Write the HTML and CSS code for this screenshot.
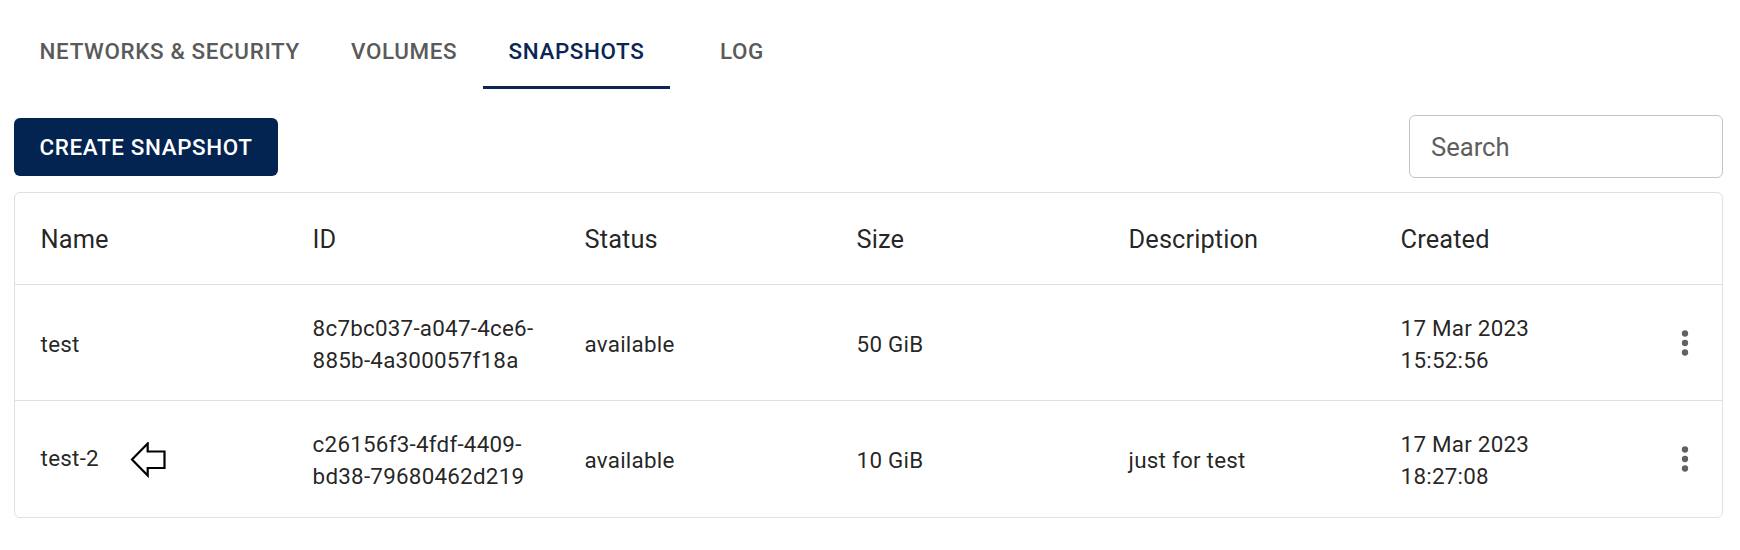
FILE: index.html
```html
<!DOCTYPE html>
<html lang="en">
<head>
<meta charset="utf-8">
<title>Snapshots</title>
<link rel="stylesheet" href="styles.css">
</head>
<body>
<div class="page">
  <nav class="tabs">
    <div class="tab">Networks &amp; Security</div>
    <div class="tab">Volumes</div>
    <div class="tab active">Snapshots</div>
    <div class="tab">Log</div>
  </nav>

  <div class="toolbar">
    <button class="btn-primary" type="button">Create Snapshot</button>
    <div class="search"><span class="placeholder">Search</span></div>
  </div>

  <div class="paper">
    <table class="table">
      <colgroup>
        <col class="c-data"><col class="c-data"><col class="c-data"><col class="c-data"><col class="c-data"><col class="c-data"><col class="c-act">
      </colgroup>
      <thead>
        <tr>
          <th>Name</th><th>ID</th><th>Status</th><th>Size</th><th>Description</th><th>Created</th><th></th>
        </tr>
      </thead>
      <tbody>
        <tr>
          <td>test</td>
          <td>8c7bc037-a047-4ce6-<br>885b-4a300057f18a</td>
          <td>available</td>
          <td>50 GiB</td>
          <td></td>
          <td>17 Mar 2023<br>15:52:56</td>
          <td class="act"><svg class="kebab" viewBox="0 0 24 24"><circle cx="12" cy="6" r="2"/><circle cx="12" cy="12" r="2"/><circle cx="12" cy="18" r="2"/></svg></td>
        </tr>
        <tr class="last">
          <td>test-2<svg class="pointer" viewBox="0 0 36 36"><polygon points="2,17.5 17.7,1.5 17.7,9.5 34.5,9.5 34.5,26 17.7,26 17.7,33.5" /></svg></td>
          <td>c26156f3-4fdf-4409-<br>bd38-79680462d219</td>
          <td>available</td>
          <td>10 GiB</td>
          <td>just for test</td>
          <td>17 Mar 2023<br>18:27:08</td>
          <td class="act"><svg class="kebab" viewBox="0 0 24 24"><circle cx="12" cy="6" r="2"/><circle cx="12" cy="12" r="2"/><circle cx="12" cy="18" r="2"/></svg></td>
        </tr>
      </tbody>
    </table>
  </div>
</div>
</body>
</html>
```

FILE: styles.css
```css
* { box-sizing: border-box; }
html, body { margin: 0; padding: 0; background: #ffffff; }
body {
  font-family: Roboto, "Noto Sans", "Liberation Sans", sans-serif;
  color: rgba(0, 0, 0, 0.87);
}
.page {
  padding: 12px 17px 0 14px;
}
.tabs {
  display: flex;
  height: 77px;
}
.tab {
  display: flex;
  align-items: center;
  justify-content: center;
  min-width: 144px;
  padding: 4px 25.6px 0;
  font-size: 22.4px;
  font-weight: 500;
  letter-spacing: 0.64px;
  text-transform: uppercase;
  color: #5a5a5a;
  border-bottom: 3px solid transparent;
  white-space: nowrap;
}
.tab.active {
  color: #0a2556;
  border-bottom-color: #0a2556;
}
.toolbar {
  display: flex;
  align-items: center;
  justify-content: space-between;
  margin-top: 26px;
  height: 63px;
}
.btn-primary {
  height: 58px;
  padding: 0 25.6px;
  border: none;
  border-radius: 6px;
  background: #032350;
  color: #ffffff;
  font-family: inherit;
  font-size: 22.4px;
  font-weight: 500;
  letter-spacing: 0.64px;
  text-transform: uppercase;
}
.search {
  width: 314px;
  height: 63px;
  border: 1px solid #c4c4c4;
  border-radius: 6px;
  display: flex;
  align-items: center;
  padding: 0 21px;
}
.placeholder {
  font-size: 25.6px;
  color: #5e5e5e;
}
.paper {
  margin-top: 14px;
  border: 1px solid #e0e0e0;
  border-radius: 6px;
  overflow: hidden;
}
.table {
  width: 100%;
  border-collapse: collapse;
  table-layout: fixed;
}
.c-data { width: 272px; }
.c-act { width: 75px; }
.table th, .table td {
  text-align: left;
  padding: 25.6px;
  border-bottom: 1px solid #e0e0e0;
  letter-spacing: 0.24px;
  vertical-align: middle;
}
.table th {
  font-size: 25.4px;
  font-weight: 400;
  line-height: 40px;
  letter-spacing: 0.1px;
  color: rgba(0, 0, 0, 0.87);
}
.table td {
  font-size: 22.4px;
  line-height: 32px;
  padding-top: 26.4px;
  padding-bottom: 24.8px;
  color: rgba(0, 0, 0, 0.87);
}
.table tr.last td { border-bottom: none; }
.table td.act {
  padding: 0;
  text-align: center;
}
.kebab {
  width: 38px;
  height: 38px;
  fill: #616161;
  vertical-align: middle;
}
.pointer {
  width: 36px;
  height: 36px;
  margin-left: 31px;
  vertical-align: middle;
  fill: #ffffff;
  stroke: #000000;
  stroke-width: 2.2;
  stroke-linejoin: miter;
}
```
